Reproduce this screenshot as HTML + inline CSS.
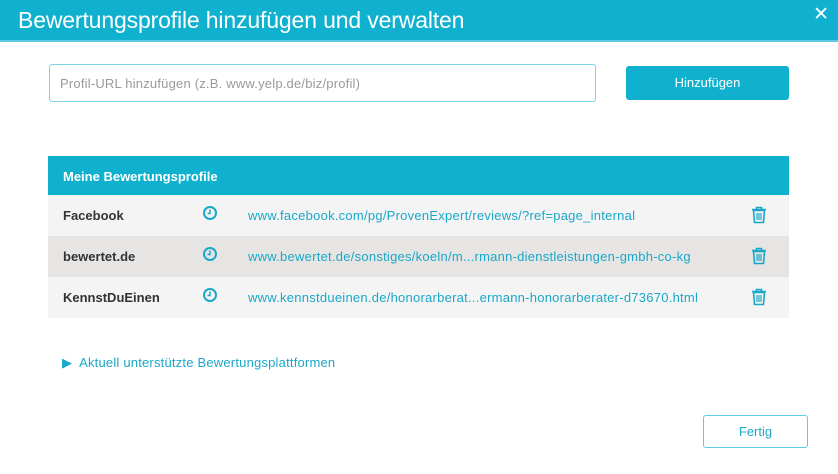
<!DOCTYPE html>
<html><head><meta charset="utf-8"><style>
*{margin:0;padding:0;box-sizing:border-box}
body{width:838px;height:474px;background:#fff;font-family:"Liberation Sans",sans-serif;position:relative;overflow:hidden}
.hdr{position:absolute;left:0;top:0;width:838px;height:42px;background:#10b1cf;border-bottom:2px solid #5fcbe0}
.hdr h1{position:absolute;left:18px;top:7px;font-weight:normal;color:#fff;font-size:23px;letter-spacing:-0.15px;white-space:nowrap}
.x{position:absolute;right:9px;top:3px;color:#fff;font-size:19px}
.inp{position:absolute;left:49px;top:64px;width:547px;height:38px;border:1px solid #7dd2e3;border-radius:3px;font-size:13px;color:#9a9a9a;padding:11px 0 0 10px;letter-spacing:0.2px}
.btn{position:absolute;left:626px;top:66px;width:163px;height:34px;background:#10b1cf;border-radius:3px;color:#fff;font-size:13px;text-align:center;line-height:34px}
.tbl{position:absolute;left:48px;top:156px;width:741px}
.th{height:39px;background:#10b1cf;color:#fff;font-weight:bold;font-size:13px;padding:13px 0 0 15px}
.row{height:41px;position:relative;background:#f4f4f4;font-size:13px}
.row.alt{background:#e6e5e4}
.nm{position:absolute;left:15px;top:13px;color:#333;font-weight:bold;font-size:13px}
.ck{position:absolute;left:154px;top:10px}
.url{position:absolute;left:200px;top:13px;color:#1aa8c8;letter-spacing:0.25px;white-space:nowrap}
.tr{position:absolute;left:703px;top:11px}
.more{position:absolute;left:62px;top:355px;color:#1aa8c8;font-size:13px;letter-spacing:0.2px}
.fert{position:absolute;left:703px;top:415px;width:105px;height:33px;border:1px solid #5fcbe0;border-radius:3px;color:#1aa8c8;font-size:13px;text-align:center;line-height:31px}
</style></head><body>
<div class="hdr"><h1>Bewertungsprofile hinzufügen und verwalten</h1><div class="x">✕</div></div>
<div class="inp">Profil-URL hinzufügen (z.B. www.yelp.de/biz/profil)</div>
<div class="btn">Hinzufügen</div>
<div class="tbl">
<div class="th">Meine Bewertungsprofile</div>
<div class="row"><span class="nm">Facebook</span><svg class="ck" width="16" height="16" viewBox="0 0 16 16"><circle cx="8" cy="8" r="6" fill="none" stroke="#1aa8c8" stroke-width="2"/><path d="M8 4.5v4H5.5" fill="none" stroke="#1aa8c8" stroke-width="1.5"/></svg><span class="url">www.facebook.com/pg/ProvenExpert/reviews/?ref=page_internal</span><svg class="tr" width="16" height="18" viewBox="0 0 16 18"><path d="M1 3.5h14M5.5 3V1.5h5V3M2.5 4.5l1 12h9l1-12z" fill="none" stroke="#1aa8c8" stroke-width="1.6"/><path d="M6 7v7M8 7v7M10 7v7" stroke="#1aa8c8" stroke-width="1.2"/></svg></div>
<div class="row alt"><span class="nm">bewertet.de</span><svg class="ck" width="16" height="16" viewBox="0 0 16 16"><circle cx="8" cy="8" r="6" fill="none" stroke="#1aa8c8" stroke-width="2"/><path d="M8 4.5v4H5.5" fill="none" stroke="#1aa8c8" stroke-width="1.5"/></svg><span class="url">www.bewertet.de/sonstiges/koeln/m...rmann-dienstleistungen-gmbh-co-kg</span><svg class="tr" width="16" height="18" viewBox="0 0 16 18"><path d="M1 3.5h14M5.5 3V1.5h5V3M2.5 4.5l1 12h9l1-12z" fill="none" stroke="#1aa8c8" stroke-width="1.6"/><path d="M6 7v7M8 7v7M10 7v7" stroke="#1aa8c8" stroke-width="1.2"/></svg></div>
<div class="row"><span class="nm">KennstDuEinen</span><svg class="ck" width="16" height="16" viewBox="0 0 16 16"><circle cx="8" cy="8" r="6" fill="none" stroke="#1aa8c8" stroke-width="2"/><path d="M8 4.5v4H5.5" fill="none" stroke="#1aa8c8" stroke-width="1.5"/></svg><span class="url">www.kennstdueinen.de/honorarberat...ermann-honorarberater-d73670.html</span><svg class="tr" width="16" height="18" viewBox="0 0 16 18"><path d="M1 3.5h14M5.5 3V1.5h5V3M2.5 4.5l1 12h9l1-12z" fill="none" stroke="#1aa8c8" stroke-width="1.6"/><path d="M6 7v7M8 7v7M10 7v7" stroke="#1aa8c8" stroke-width="1.2"/></svg></div>
</div>
<div class="more">▶&nbsp; Aktuell unterstützte Bewertungsplattformen</div>
<div class="fert">Fertig</div>
</body></html>
